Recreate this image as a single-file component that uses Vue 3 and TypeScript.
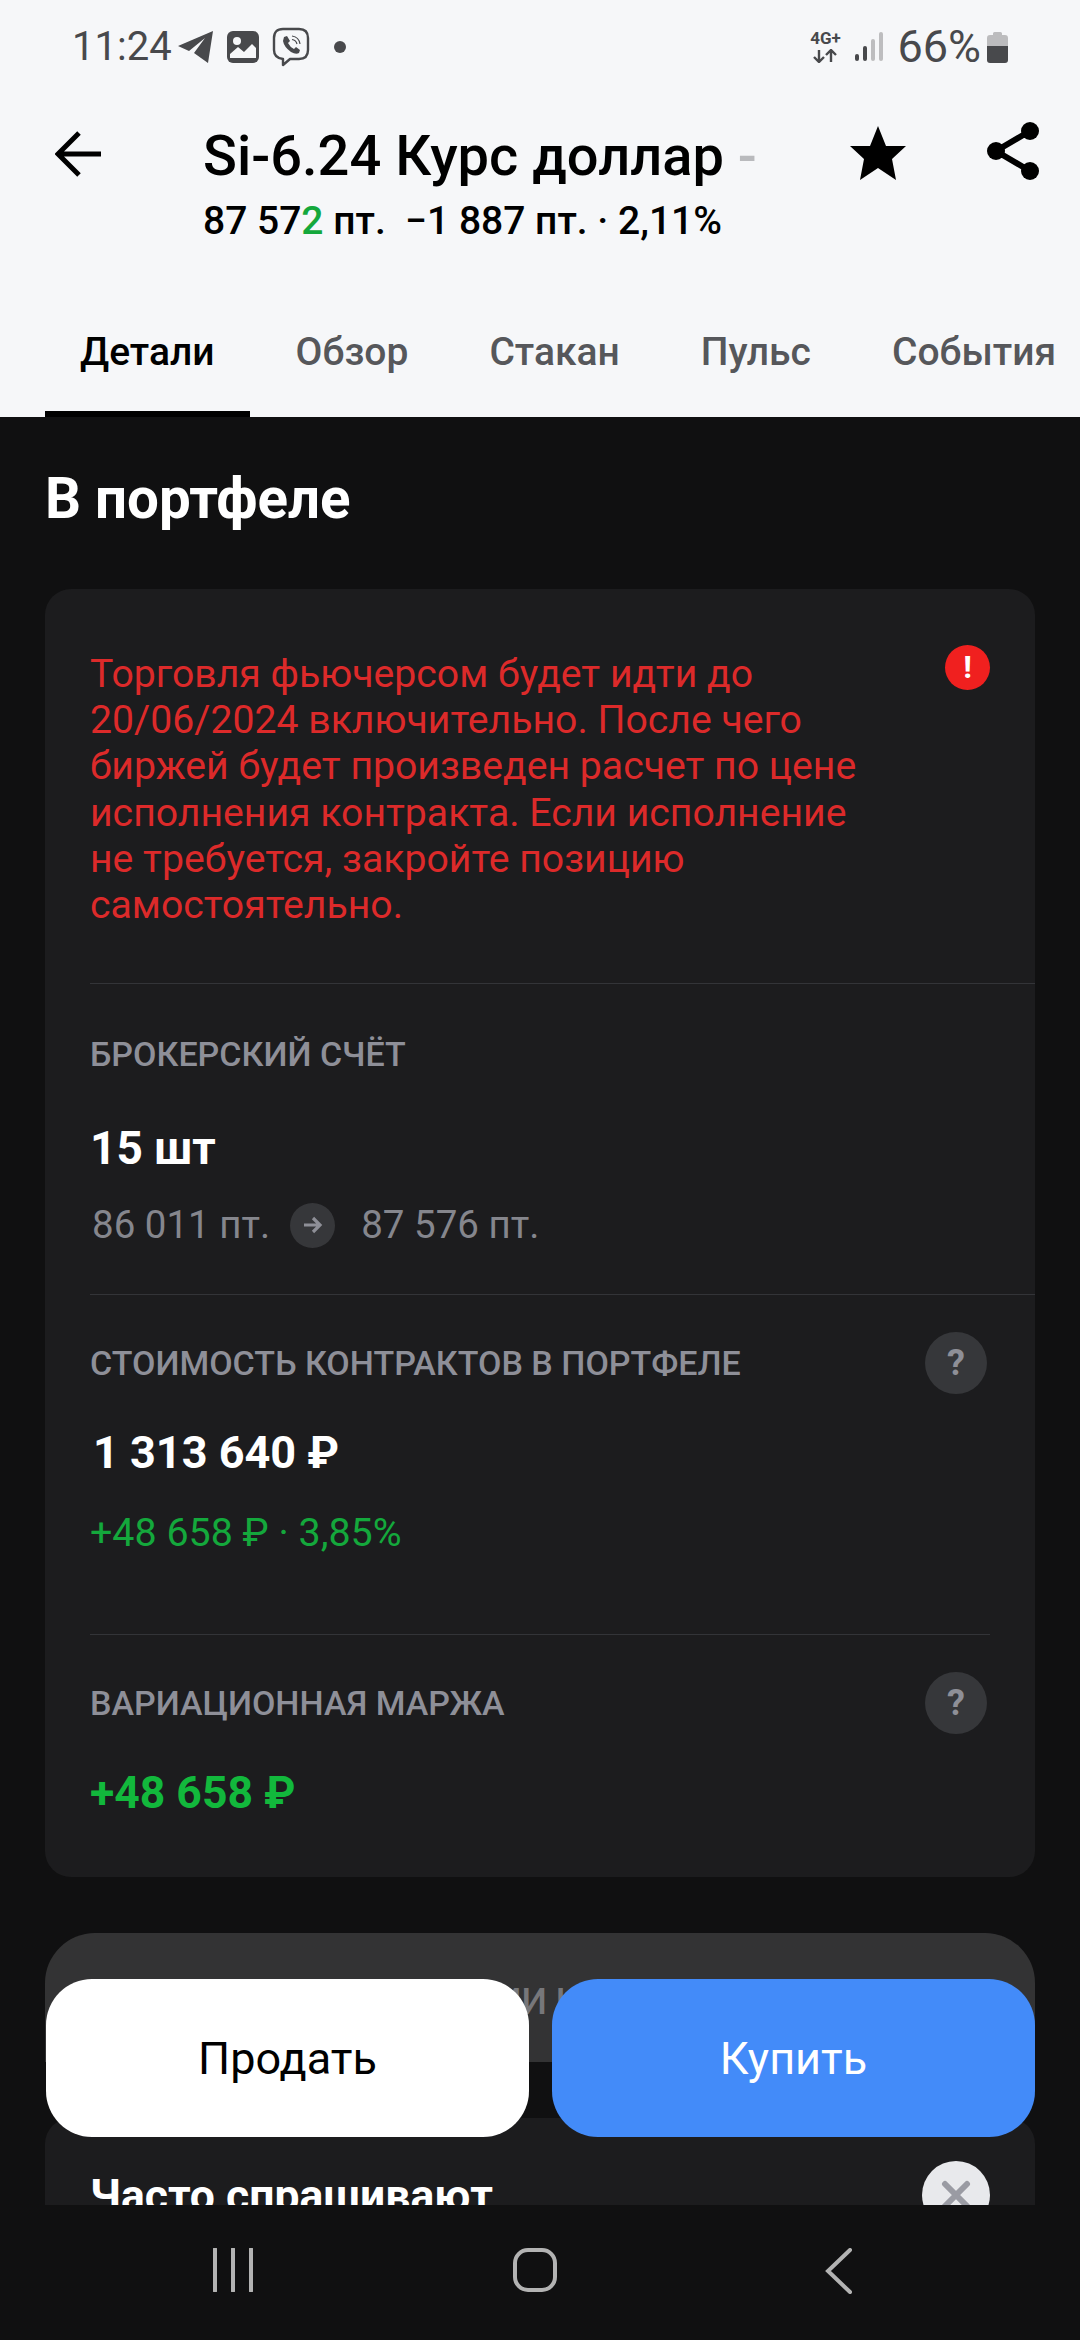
<script setup lang="ts">
const tabs: string[] = ['Детали', 'Обзор', 'Стакан', 'Пульс', 'События'];
const alertLines: string[] = [
  'Торговля фьючерсом будет идти до',
  '20/06/2024 включительно. После чего',
  'биржей будет произведен расчет по цене',
  'исполнения контракта. Если исполнение',
  'не требуется, закройте позицию',
  'самостоятельно.'
];
</script>

<template>
  <div class="screen">
    <header class="top">
      <div class="status">
        <div class="status-left">
          <span class="time">11:24</span>
          <svg class="st-tg" width="36" height="32" viewBox="0 0 36 32"><path d="M35 0 L0 15 L11 20 L27 7 L16 22 L30 32 Z" fill="#48494c"/></svg>
          <svg class="st-img" width="32" height="32" viewBox="0 0 32 32"><rect width="32" height="32" rx="6" fill="#48494c"/><circle cx="10" cy="10" r="4" fill="#f6f7f9"/><path d="M3 27 V23 L11 16 L17 21 L25 13 L29 17 V27 Z" fill="#f6f7f9"/></svg>
          <svg class="st-viber" width="38" height="40" viewBox="0 0 38 40"><path d="M11 2 H27 Q36 2 36 11 V23 Q36 32 27 32 H18 L11 38 V32 Q2 31 2 23 V11 Q2 2 11 2 Z" fill="none" stroke="#48494c" stroke-width="2.4" stroke-linejoin="round"/><path d="M12 10 L15 9 L18 14 L16 16 Q18 20 22 22 L24 20 L28 23 L27 26 Q24 28 19 25 Q12 20 11 14 Z" fill="#48494c"/><path d="M20 9 Q27 10 28 17 M20 12.500 Q24 13 25 17" fill="none" stroke="#48494c" stroke-width="1.200"/></svg>
          <span class="st-dot"></span>
        </div>
        <div class="status-right">
          <div class="net">
            <span class="net-label">4G+</span>
            <svg width="26" height="14" viewBox="0 0 26 14"><path d="M7 1 V12 M2 8 L7 13 L12 8 M19 13 V2 M14 6 L19 1 L24 6" fill="none" stroke="#48494c" stroke-width="2.400"/></svg>
          </div>
          <svg class="signal" width="28" height="30" viewBox="0 0 28 30"><rect x="0" y="22" width="4" height="7" rx="2" fill="#48494c"/><rect x="8" y="14" width="4" height="15" rx="2" fill="#48494c"/><rect x="16" y="7" width="4" height="22" rx="2" fill="#bdbdbf"/><rect x="24" y="0" width="4" height="29" rx="2" fill="#bdbdbf"/></svg>
          <span class="battery-pct">66%</span>
          <svg class="battery" width="21" height="31" viewBox="0 0 21 31"><path d="M6 3 V1.500 Q6 0 7.500 0 H13.500 Q15 0 15 1.500 V3 H18 Q21 3 21 6 V14 H0 V6 Q0 3 3 3 Z" fill="#bcbcbe"/><path d="M0 14 H21 V28 Q21 31 18 31 H3 Q0 31 0 28 Z" fill="#48494c"/></svg>
        </div>
      </div>

      <div class="title-row">
        <svg class="back" width="48" height="46" viewBox="0 0 48 46"><path d="M46 23 H4 M24 2 L3 23 L24 44" fill="none" stroke="#000" stroke-width="5"/></svg>
        <div class="title-block">
          <div class="title">Si-6.24 Курс доллар <span class="title-fade">-</span></div>
          <div class="quote">87 57<span class="green-digit">2</span> пт.&nbsp;&nbsp;−1 887 пт. · 2,11%</div>
        </div>
        <svg class="star" width="56" height="54" viewBox="0 0 56 54"><path d="M28 0 L36 20 H56 L42 33 L46 54 L28 42 L10 54 L14 33 L0 20 H20 Z" fill="#000"/></svg>
        <svg class="share" width="52" height="58" viewBox="0 0 52 58"><path d="M43 9 L9 29 L43 49" fill="none" stroke="#000" stroke-width="6"/><circle cx="43" cy="9" r="9"/><circle cx="9" cy="29" r="9"/><circle cx="43" cy="49" r="9"/></svg>
      </div>

      <nav class="tabs">
        <span v-for="(tab, i) in tabs" :key="tab" class="tab" :class="{ active: i === 0 }">{{ tab }}</span>
      </nav>
    </header>

    <main class="content">
      <h1 class="section-title">В портфеле</h1>

      <section class="card">
        <div class="alert">
          <p class="alert-text"><span v-for="line in alertLines" :key="line" class="alert-line">{{ line }}</span></p>
          <span class="alert-icon">!</span>
        </div>

        <div class="block block-account">
          <div class="label">БРОКЕРСКИЙ СЧЁТ</div>
          <div class="big account-qty">15 шт</div>
          <div class="prices">
            <span>86 011 пт.</span>
            <span class="arrow-dot">
              <svg width="20" height="18" viewBox="0 0 20 18"><path d="M1 9 H17 M10 2 L17 9 L10 16" fill="none" stroke="#8e8f97" stroke-width="3.200"/></svg>
            </span>
            <span>87 576 пт.</span>
          </div>
        </div>

        <div class="block block-value">
          <div class="label-row">
            <span class="label">СТОИМОСТЬ КОНТРАКТОВ В ПОРТФЕЛЕ</span>
            <span class="help">?</span>
          </div>
          <div class="big value-sum">1 313 640 ₽</div>
          <div class="gain">+48 658 ₽ · 3,85%</div>
        </div>

        <div class="block block-margin">
          <div class="label-row">
            <span class="label">ВАРИАЦИОННАЯ МАРЖА</span>
            <span class="help">?</span>
          </div>
          <div class="big margin-sum">+48 658 ₽</div>
        </div>
      </section>

      <div class="ghost-btn">ОПЕРАЦИИ НА СЧЕТЕ</div>

      <section class="card faq">
        <span class="faq-title">Часто спрашивают</span>
        <span class="faq-close">
          <svg width="30" height="30" viewBox="0 0 30 30"><path d="M4 4 L26 26 M26 4 L4 26" fill="none" stroke="#9a9ba3" stroke-width="6" stroke-linecap="round"/></svg>
        </span>
      </section>

      <div class="actions">
        <button class="action sell">Продать</button>
        <button class="action buy">Купить</button>
      </div>
    </main>

    <footer class="navbar">
      <svg width="40" height="44" viewBox="0 0 40 44"><path d="M2 1 V43 M20 1 V43 M38 1 V43" fill="none" stroke="#b3b3b3" stroke-width="4" stroke-linecap="round"/></svg>
      <svg class="nav-home" width="44" height="44" viewBox="0 0 44 44"><rect x="2" y="2" width="40" height="40" rx="13" fill="none" stroke="#b3b3b3" stroke-width="4"/></svg>
      <svg class="nav-back" width="28" height="46" viewBox="0 0 28 46"><path d="M25 2 L3 23 L25 44" fill="none" stroke="#b3b3b3" stroke-width="4" stroke-linecap="round"/></svg>
    </footer>
  </div>
</template>

<style>
html,
body {
  margin: 0;
  background: #101011;
}
</style>

<style scoped>
.screen {
  position: relative;
  width: 1080px;
  height: 2340px;
  display: flex;
  flex-direction: column;
  overflow: hidden;
  background: #101011;
  font-family: Roboto, "Liberation Sans", sans-serif;
}

.top {
  height: 417px;
  flex: none;
  background: #f6f7f9;
  color: #000;
}

.status {
  height: 94px;
  box-sizing: border-box;
  padding: 0 72px 0 72px;
  display: flex;
  justify-content: space-between;
  align-items: center;
  color: #48494c;
}

.status-left,
.status-right {
  display: flex;
  align-items: center;
}

.time {
  font-size: 40px;
  line-height: 48px;
  width: 106px;
}

.st-img {
  margin-left: 13px;
}

.st-viber {
  margin-left: 13px;
}

.st-dot {
  width: 12px;
  height: 12px;
  border-radius: 50%;
  margin-left: 24px;
  background: #48494c;
}

.net {
  width: 34px;
  display: flex;
  flex-direction: column;
  align-items: center;
  gap: 3px;
}

.net-label {
  font-size: 17px;
  line-height: 15px;
  font-weight: 700;
}

.signal {
  margin-left: 13px;
}

.battery-pct {
  font-size: 45px;
  line-height: 48px;
  margin-left: 14px;
}

.battery {
  margin-left: 6px;
}

.title-row {
  display: flex;
  align-items: flex-start;
  padding: 28px 0 0 55px;
  height: 136px;
  box-sizing: border-box;
}

.back {
  margin-top: 9px;
}

.title-block {
  width: 565px;
  margin-left: 100px;
  white-space: nowrap;
}

.title {
  font-size: 56px;
  line-height: 70px;
  font-weight: 500;
  margin-top: -1px;
}

.title-fade {
  color: #b9babd;
}

.quote {
  font-size: 39px;
  line-height: 50px;
  font-weight: 500;
  margin-top: 5px;
}

.green-digit {
  color: #14a83c;
}

.star {
  margin-left: 82px;
  margin-top: 4px;
}

.share {
  margin-left: 81px;
}

.tabs {
  display: flex;
  gap: 11px;
  padding: 0 0 0 45px;
  margin-top: 57px;
}

.tab {
  height: 130px;
  box-sizing: border-box;
  padding: 0 35px;
  font-size: 39px;
  line-height: 130px;
  color: #56575b;
  font-weight: 500;
  white-space: nowrap;
}

.tab.active {
  color: #000;
  border-bottom: 6px solid #000;
}

.content {
  position: relative;
  flex: 1;
  min-height: 0;
  overflow: hidden;
  padding: 0 45px;
  box-sizing: border-box;
}

.section-title {
  margin: 52px 0 0 0;
  height: 120px;
  font-size: 56.500px;
  line-height: 60px;
  font-weight: 700;
  color: #fff;
}

.card {
  background: #1c1c1e;
  border-radius: 26px;
  padding-left: 45px;
}

.alert {
  display: flex;
  justify-content: space-between;
  height: 395px;
  box-sizing: border-box;
  padding: 62px 45px 0 0;
  border-bottom: 1px solid #333438;
}

.alert-text {
  margin: 0;
  color: #dc2a2a;
  font-size: 39.200px;
  line-height: 46.200px;
}

.alert-line {
  display: block;
  white-space: nowrap;
}

.alert-icon {
  width: 45px;
  height: 45px;
  margin-top: -6px;
  border-radius: 50%;
  background: #f0201f;
  color: #fff;
  font-size: 32px;
  line-height: 45px;
  font-weight: 700;
  text-align: center;
}

.block {
  box-sizing: border-box;
  border-bottom: 1px solid #333438;
}

.block-account {
  height: 311px;
  padding-top: 50px;
}

.block-value {
  height: 340px;
  padding-top: 37px;
  margin-right: 45px;
}

.block-margin {
  padding-top: 37px;
  height: 242px;
  border-bottom: 0;
  margin-right: 45px;
}

.label {
  font-size: 34px;
  line-height: 40px;
  color: #8e8f98;
  font-weight: 500;
  white-space: nowrap;
}

.label-row {
  display: flex;
  justify-content: space-between;
  align-items: center;
  height: 62px;
  padding-right: 3px;
}

.big {
  font-size: 45px;
  line-height: 52px;
  font-weight: 700;
  color: #fff;
  white-space: nowrap;
}

.account-qty {
  margin-top: 48px;
  margin-left: 0;
  font-size: 46px;
}

.prices {
  display: flex;
  align-items: center;
  margin-top: 28px;
  margin-left: 2px;
  font-size: 38.500px;
  line-height: 46px;
  color: #85868d;
}

.arrow-dot {
  width: 45px;
  height: 45px;
  margin: 0 26px 0 20px;
  border-radius: 50%;
  background: #36373a;
  display: flex;
  align-items: center;
  justify-content: center;
}

.help {
  width: 62px;
  height: 62px;
  border-radius: 50%;
  background: #36373a;
  color: #8e8f97;
  font-size: 36px;
  line-height: 62px;
  font-weight: 700;
  text-align: center;
}

.value-sum {
  margin-top: 33px;
  margin-left: 3px;
}

.gain {
  margin-top: 32px;
  font-size: 39.400px;
  line-height: 44px;
  color: #14a83c;
}

.margin-sum {
  margin-top: 33px;
  font-size: 44.500px;
  color: #12b83c;
}

.ghost-btn {
  margin-top: 56px;
  height: 129px;
  border-radius: 50px 50px 0 0;
  background: #333334;
  color: #77777a;
  font-size: 36px;
  font-weight: 500;
  line-height: 138px;
  text-align: center;
}

.faq {
  position: relative;
  margin-top: 56px;
  height: 200px;
  padding-top: 52px;
  box-sizing: border-box;
}

.faq-title {
  font-size: 44.500px;
  line-height: 52px;
  font-weight: 700;
  color: #fff;
}

.faq-close {
  position: absolute;
  top: 43px;
  right: 45px;
  width: 68px;
  height: 68px;
  border-radius: 50%;
  background: #e8e9ec;
  display: flex;
  align-items: center;
  justify-content: center;
}

.actions {
  position: absolute;
  left: 46px;
  right: 45px;
  top: 1562px;
  display: flex;
  gap: 23px;
}

.action {
  flex: 1;
  height: 158px;
  border: 0;
  border-radius: 46px;
  font-family: inherit;
  font-size: 45px;
  padding: 0;
}

.sell {
  background: #fff;
  color: #000;
}

.buy {
  background: #438bf9;
  color: #fff;
}

.navbar {
  height: 135px;
  flex: none;
  background: #101011;
  display: flex;
  align-items: flex-start;
  padding: 43px 0 0 213px;
  box-sizing: border-box;
  position: relative;
}

.nav-home {
  margin-left: 260px;
}

.nav-back {
  margin-left: 268px;
}
</style>
